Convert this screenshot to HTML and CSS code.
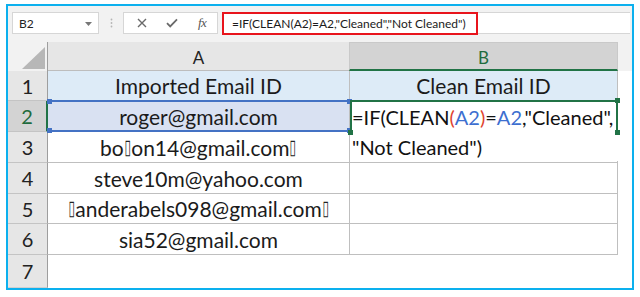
FILE: index.html
```html
<!DOCTYPE html>
<html>
<head>
<meta charset="utf-8">
<link rel="stylesheet" href="styles.css">
</head>
<body>
<div class="frame">
  <div class="toolbar">
    <div class="namebox"><span>B2</span><svg class="caret" width="7" height="4" viewBox="0 0 7 4"><path d="M0 0H7L3.5 4Z" fill="#777"/></svg></div>
    <div class="sep"><svg width="3" height="10" viewBox="0 0 3 10"><circle cx="1.5" cy="1.5" r="0.9" fill="#b5b5b5"/><circle cx="1.5" cy="5" r="0.9" fill="#b5b5b5"/><circle cx="1.5" cy="8.5" r="0.9" fill="#b5b5b5"/></svg></div>
    <div class="controls">
      <svg width="10" height="10" viewBox="0 0 10 10"><path d="M1 1L9 9M9 1L1 9" stroke="#6a6a6a" stroke-width="1.4" fill="none"/></svg>
      <svg width="12" height="10" viewBox="0 0 12 10"><path d="M1 5.2L4.2 8.4L11 1.4" stroke="#6a6a6a" stroke-width="1.8" fill="none"/></svg>
      <span class="fx">fx</span>
    </div>
    <div class="formula"><span class="ftext">=IF(CLEAN(A2)=A2,"Cleaned","Not Cleaned")</span></div>
  </div>
  <div class="sheet">
    <div class="corner"><svg width="23" height="22" viewBox="0 0 23 22"><path d="M0 22H23V0Z" fill="#b7b7b7"/></svg></div>
    <div class="colhead">A</div>
    <div class="colhead sel">B</div>
    <div class="colrest"></div>

    <div class="rowhead">1</div>
    <div class="cell a hd">Imported Email ID</div>
    <div class="cell b hd">Clean Email ID</div>
    <div class="rest"></div>

    <div class="rowhead sel">2</div>
    <div class="cell a ref">roger@gmail.com</div>
    <div class="cell b"></div>
    <div class="rest"></div>

    <div class="rowhead">3</div>
    <div class="cell a">bo<span class="tofu">▯</span>on14@gmail.com<span class="tofu">▯</span></div>
    <div class="cell b"></div>
    <div class="rest"></div>

    <div class="rowhead">4</div>
    <div class="cell a">steve10m@yahoo.com</div>
    <div class="cell b"></div>
    <div class="rest"></div>

    <div class="rowhead">5</div>
    <div class="cell a"><span class="tofu">▯</span>anderabels098@gmail.com<span class="tofu">▯</span></div>
    <div class="cell b"></div>
    <div class="rest"></div>

    <div class="rowhead">6</div>
    <div class="cell a">sia52@gmail.com</div>
    <div class="cell b"></div>
    <div class="rest"></div>

    <div class="rowhead last">7</div>
    <div class="empty"></div>
    <div class="empty"></div>
    <div class="rest"></div>

    <div class="refbox"><i class="h tl"></i><i class="h tr"></i><i class="h bl"></i><i class="h br"></i></div>
    <div class="editor">
      <div class="eline">=IF(CLEAN<span class="red">(</span><span class="blue">A2</span><span class="red">)</span>=<span class="blue">A2</span>,"Cleaned",</div>
      <div class="eline">"Not Cleaned")</div>
      <i class="g gtr"></i><i class="g gbl"></i><i class="g gbr"></i>
    </div>
  </div>
</div>
</body>
</html>
```
FILE: styles.css
```css
* { box-sizing: border-box; }
html, body { margin: 0; padding: 0; background: #ffffff; }
body { font-family: Lato, "Noto Sans", "DejaVu Sans", sans-serif; color: #1b1b1b; }

.frame {
  margin: 4px 0 0 6px;
  width: 628px;
  height: 286px;
  border: 2px solid #0cb0ee;
  background: #f2f2f2;
  display: flex;
  flex-direction: column;
}

.toolbar {
  height: 36px;
  display: flex;
  align-items: flex-start;
  padding: 6px 2px 0 4px;
}
.namebox {
  width: 87px;
  height: 22px;
  background: #fff;
  border: 1px solid #d6d6d6;
  display: flex;
  align-items: center;
  justify-content: space-between;
  padding: 0 6px 0 6px;
  font-size: 12px;
  color: #222;
}
.caret { margin-top: 1px; }
.sep {
  width: 24px;
  height: 22px;
  display: flex;
  align-items: center;
  justify-content: center;
}
.controls {
  width: 95px;
  height: 22px;
  background: #fff;
  border: 1px solid #d6d6d6;
  display: flex;
  align-items: center;
  padding: 0 8px 0 13px;
  gap: 19px;
}
.fx {
  font-family: "Liberation Serif", "DejaVu Serif", serif;
  font-style: italic;
  font-size: 13px;
  color: #555;
  letter-spacing: -0.5px;
  margin-left: 1px;
}
.formula {
  flex: 1;
  margin-left: 4px;
  height: 22px;
  background: #fff;
  border-top: 1px solid #d6d6d6;
  border-bottom: 1px solid #d6d6d6;
  display: flex;
}
.ftext {
  width: 256px;
  height: 23px;
  margin-top: -1px;
  border: 2px solid #e8141c;
  font-size: 12px;
  line-height: 19px;
  padding-left: 8px;
  color: #1b1b1b;
  white-space: nowrap;
}

.sheet {
  position: relative;
  flex: 1;
  display: grid;
  grid-template-columns: 40px 302px 268px 1fr;
  grid-template-rows: 29px 30px 31px 31px 31px 30px 31px 1fr;
  background: #fff;
}
.corner {
  background: #f2f2f2;
  border-right: 1px solid #9e9e9e;
  display: flex;
  align-items: flex-end;
  justify-content: flex-end;
  padding: 0 2px 2px 0;
}
.colhead {
  background: #e6e6e6;
  border-right: 1px solid #c9c9c9;
  border-bottom: 1px solid #bdbdbd;
  font-size: 17px;
  display: flex;
  align-items: center;
  justify-content: center;
  padding-top: 2px;
  color: #222;
}
.colhead.sel {
  background: #d3d3d3;
  color: #1f6b3d;
  border-top: 1px solid #c9c9c9;
  border-bottom: 2px solid #217346;
  margin-left: -1px;
  border-left: 1px solid #c9c9c9;
}
.colrest { background: #f2f2f2; }

.rowhead {
  background: #e6e6e6;
  border-right: 1px solid #9e9e9e;
  border-bottom: 1px solid #c4c4c4;
  font-size: 20px;
  display: flex;
  align-items: center;
  justify-content: center;
  color: #222;
}
.rowhead.sel {
  background: #d3d3d3;
  color: #1f6b3d;
  border-right: 2px solid #217346;
}
.rowhead.last { border-bottom: 1px solid #d0d0d0; }

.cell {
  border-right: 1px solid #bfbfbf;
  border-bottom: 1px solid #bfbfbf;
  font-size: 21px;
  display: flex;
  align-items: center;
  justify-content: center;
  white-space: nowrap;
  color: #1b1b1b;
}
.cell.hd { background: #ddebf7; }
.cell.ref { background: #d9e1f2; }
.rest, .empty { background: #fff; }

.tofu {
  display: inline-block;
  font-family: "DejaVu Sans", sans-serif;
  font-size: 21px;
  line-height: 1;
  color: #222;
  transform: scaleX(0.55);
  margin: 0 -2px;
}

.refbox {
  position: absolute;
  left: 40px;
  top: 58px;
  width: 302px;
  height: 32px;
  border-top: 2px solid #4472c4;
  border-bottom: 2px solid #4472c4;
  pointer-events: none;
}
.h {
  position: absolute;
  width: 5px;
  height: 5px;
  background: #4472c4;
}
.tl { left: -1px; top: -3px; }
.tr { right: -2px; top: -3px; }
.bl { left: -1px; bottom: -3px; }
.br { right: -2px; bottom: -3px; }

.editor {
  position: absolute;
  left: 342px;
  top: 58px;
  width: 268px;
  height: 61px;
  background: #fff;
  border-top: 2px solid #217346;
  font-size: 20px;
  color: #111;
  padding-left: 2px;
}
.editor::before {
  content: "";
  position: absolute;
  left: 0;
  top: -2px;
  width: 2px;
  height: 34px;
  background: #217346;
}
.editor::after {
  content: "";
  position: absolute;
  right: 0;
  top: -2px;
  width: 2px;
  height: 33px;
  background: #217346;
}
.eline {
  height: 30px;
  line-height: 30px;
  white-space: nowrap;
}
.red { color: #e0432f; }
.blue { color: #3d6fd0; }
.g {
  position: absolute;
  width: 5px;
  height: 5px;
  background: #217346;
}
.gtr { right: -2px; top: -4px; }
.gbl { left: -2px; top: 28px; }
.gbr { right: -2px; top: 28px; }
```
